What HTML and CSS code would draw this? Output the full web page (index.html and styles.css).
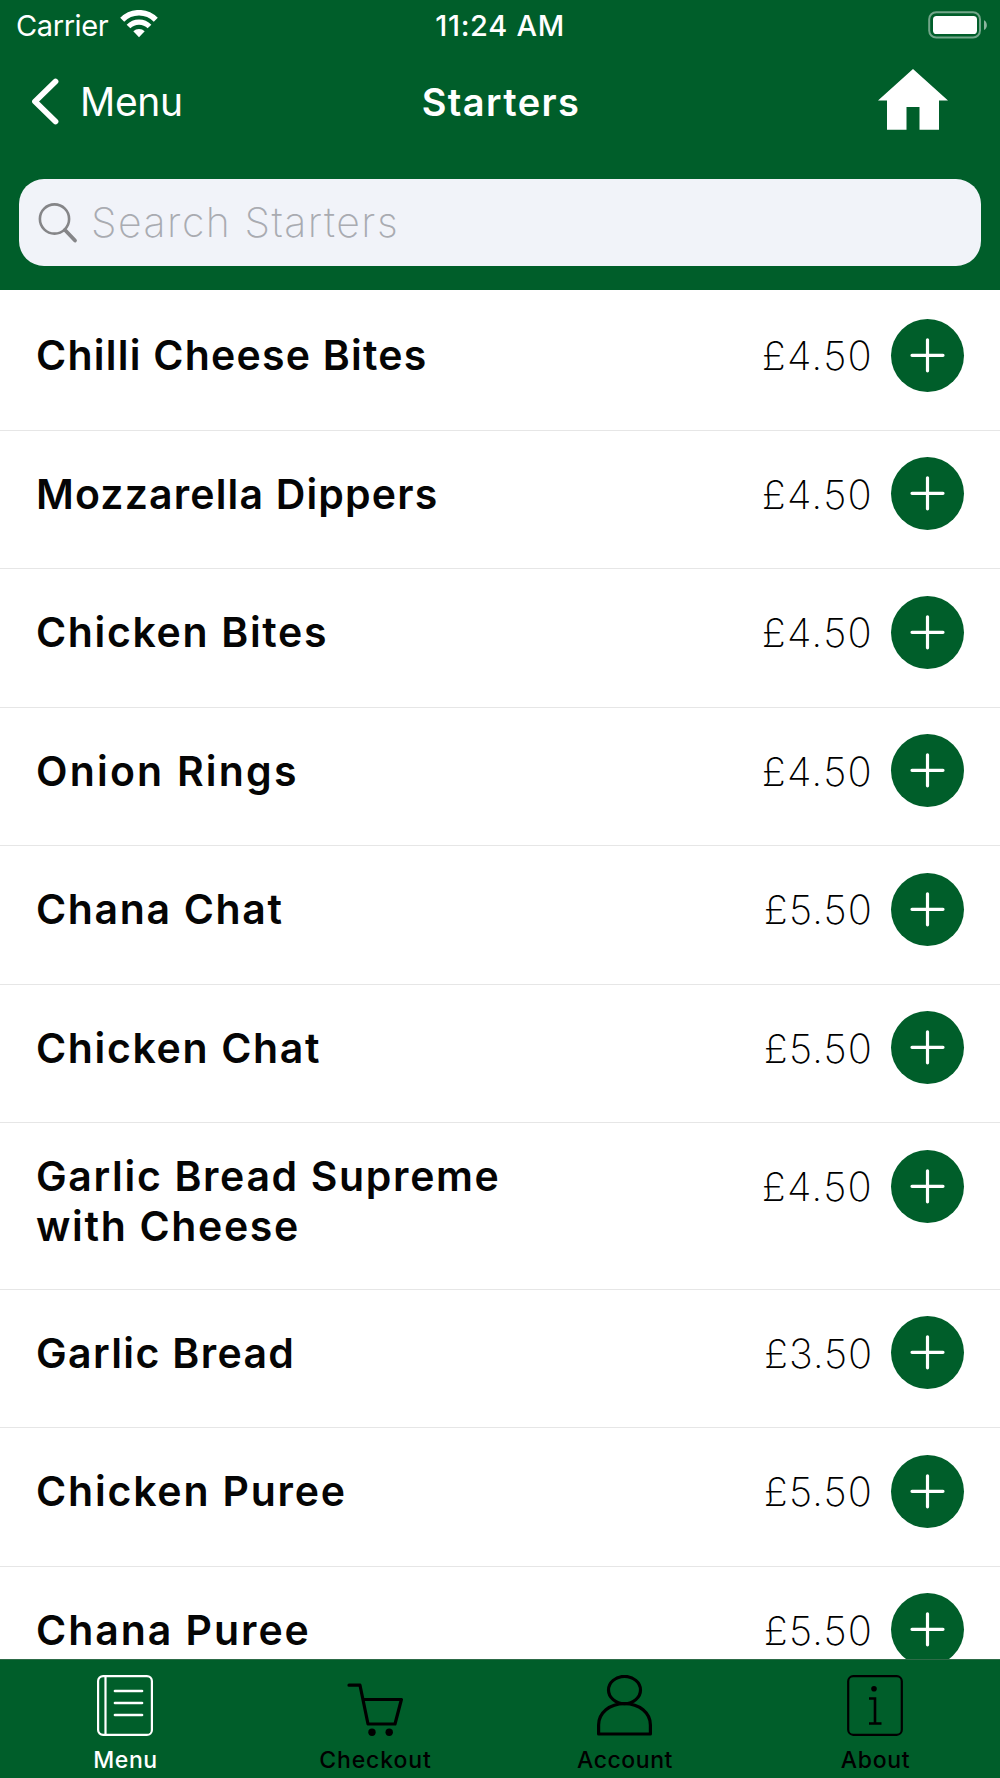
FILE: index.html
```html
<!DOCTYPE html>
<html lang="en">
<head>
<meta charset="utf-8">
<title>Starters</title>
<link rel="stylesheet" href="styles.css">
</head>
<body>
<svg class="defs" width="0" height="0" aria-hidden="true">
  <symbol id="plus" viewBox="0 0 73 73"><path d="M36.5 20.800V51.800M21 36.300H52" fill="none" stroke="#fff" stroke-width="3.200" stroke-linecap="round"/></symbol>
</svg>
<div class="app">
  <header class="header">
    <div class="status">
      <div class="carrier"><span>Carrier</span>
        <svg width="38" height="28" viewBox="0 0 38 28" fill="none" stroke="#fff"><path d="M2.200 9.800a23.500 23.500 0 0 1 33.600 0" stroke-width="5.600"/><path d="M8.500 16.500a14.800 14.800 0 0 1 21 0" stroke-width="5.200"/><path d="M13.300 21.200a8.200 8.200 0 0 1 11.400 0L19 27.200z" fill="#fff" stroke="none"/></svg>
      </div>
      <div class="time">11:24 AM</div>
      <svg class="battery" width="60" height="28" viewBox="0 0 60 28"><rect x="1.200" y="1.200" width="50.800" height="25.400" rx="7" fill="none" stroke="#fff" stroke-opacity=".45" stroke-width="2"/><rect x="5" y="5" width="44" height="18" rx="3.600" fill="#fff"/><path d="M56 9.200c3.800 1.600 3.800 8.200 0 9.800z" fill="#fff" fill-opacity=".55"/></svg>
    </div>
    <nav class="nav">
      <a class="back"><svg width="28" height="48" viewBox="0 0 28 48"><path d="M24.500 4.500 4 24.500 24.500 44.500" fill="none" stroke="#fff" stroke-width="5.800" stroke-linecap="round" stroke-linejoin="round"/></svg><span>Menu</span></a>
      <h1 class="title">Starters</h1>
      <svg class="home" width="70" height="61" viewBox="0 0 70 61"><path d="M35 0 70 31.500H61V60.700H41.500V38H28.500V60.700H9V31.500H0z" fill="#fff"/></svg>
    </nav>
    <div class="search">
      <svg width="40" height="42" viewBox="0 0 40 42" fill="none" stroke="#858588"><circle cx="16.500" cy="17" r="14.600" stroke-width="2.600"/><path d="M27 28 37 38.500" stroke-width="3.800" stroke-linecap="round"/></svg>
      <span>Search Starters</span>
    </div>
  </header>
  <main class="list">
    <div class="row"><div class="name n1">Chilli Cheese Bites</div><div class="price p4">£4.50</div><svg class="add"><use href="#plus"/></svg></div>
    <div class="row"><div class="name n2">Mozzarella Dippers</div><div class="price p4">£4.50</div><svg class="add"><use href="#plus"/></svg></div>
    <div class="row"><div class="name n3">Chicken Bites</div><div class="price p4">£4.50</div><svg class="add"><use href="#plus"/></svg></div>
    <div class="row"><div class="name n4">Onion Rings</div><div class="price p4">£4.50</div><svg class="add"><use href="#plus"/></svg></div>
    <div class="row"><div class="name n3">Chana Chat</div><div class="price p5">£5.50</div><svg class="add"><use href="#plus"/></svg></div>
    <div class="row"><div class="name n3">Chicken Chat</div><div class="price p5">£5.50</div><svg class="add"><use href="#plus"/></svg></div>
    <div class="row"><div class="name n3">Garlic Bread Supreme<br>with Cheese</div><div class="price p4">£4.50</div><svg class="add"><use href="#plus"/></svg></div>
    <div class="row"><div class="name n5">Garlic Bread</div><div class="price p3">£3.50</div><svg class="add"><use href="#plus"/></svg></div>
    <div class="row"><div class="name n6">Chicken Puree</div><div class="price p5">£5.50</div><svg class="add"><use href="#plus"/></svg></div>
    <div class="row"><div class="name n7">Chana Puree</div><div class="price p5">£5.50</div><svg class="add"><use href="#plus"/></svg></div>
  </main>
  <footer class="tabs">
    <a class="tab active"><svg width="56" height="61" viewBox="0 0 56 61" fill="none" stroke="currentColor" stroke-width="2.200"><rect x="1.100" y="1.100" width="53.800" height="58.800" rx="5"/><path d="M8.500 1V60"/><path d="M18 16H45M18 28H45M18 40H45" stroke-width="2.700" stroke-linecap="round"/></svg><span class="t-menu">Menu</span></a>
    <a class="tab"><svg width="56" height="61" viewBox="0 0 56 61" fill="none" stroke="currentColor" stroke-width="3.200" stroke-linecap="round" stroke-linejoin="round"><path d="M2 10.200H13L21 49H48L54.400 24.500H16"/><circle cx="25" cy="57.200" r="3.700" fill="currentColor" stroke="none"/><circle cx="42.200" cy="57.200" r="3.700" fill="currentColor" stroke="none"/></svg><span class="t-checkout">Checkout</span></a>
    <a class="tab"><svg width="56" height="61" viewBox="0 0 56 61" fill="none" stroke="currentColor" stroke-width="3.200" stroke-linejoin="round"><ellipse cx="27.500" cy="15" rx="16" ry="13.600"/><path d="M1.600 59V50C1.600 38 12.500 28.600 27.500 28.600S53.400 38 53.400 50V59z"/></svg><span class="t-account">Account</span></a>
    <a class="tab"><svg width="56" height="61" viewBox="0 0 56 61" fill="none" stroke="currentColor" stroke-width="2.200"><rect x="1.200" y="1.200" width="53.600" height="58.600" rx="5"/><circle cx="27" cy="13.700" r="2.800" fill="currentColor" stroke="none"/><path d="M22 23.500H28V48.500M22 48.500H34.500" stroke-width="2.600"/></svg><span class="t-about">About</span></a>
  </footer>
</div>
</body>
</html>
```
FILE: styles.css
```css
* { box-sizing: border-box; }
body { margin: 0; background: #fff; font-family: Inter, "Liberation Sans", sans-serif; }
svg { display: block; flex: none; }
.defs { position: absolute; }
.app { width: 1000px; height: 1778px; display: flex; flex-direction: column; overflow: hidden; }

.header { flex: none; height: 290px; background: #005e2a; color: #fff; }
.status { height: 50px; display: grid; grid-template-columns: 1fr auto 1fr; align-items: center; padding: 0 12px 0 16px; }
.carrier { display: flex; align-items: center; gap: 12px; font-size: 29px; letter-spacing: -.4px; }
.carrier svg { margin-bottom: 2px; }
.time { font-size: 29px; font-weight: 500; letter-spacing: .7px; margin-right: 4px; }
.battery { justify-self: end; margin-bottom: 1px; }

.nav { height: 104px; display: grid; grid-template-columns: 1fr auto 1fr; align-items: center; padding: 0 52px 2px 31px; }
.back { display: flex; align-items: center; gap: 21px; font-size: 39px; letter-spacing: -.3px; }
.title { margin: 0; padding: 2px 0 0 23px; font-size: 38px; font-weight: 600; letter-spacing: 1.4px; }
.home { justify-self: end; margin-bottom: 4px; }

.search { height: 87px; margin: 25px 19px 0; padding-left: 19px; display: flex; align-items: center; gap: 13px; background: #f1f3f9; border-radius: 25px; color: #a9abb1; font-size: 41px; font-weight: 200; letter-spacing: 1.5px; }
.search span { padding-bottom: 2px; }

.list { flex: 1; min-height: 0; overflow: hidden; padding-top: 2.300px; }
.row { display: flex; align-items: flex-start; min-height: 138.540px; padding: 28px 36px 38.200px; border-bottom: 1px solid #e6e6e6; }
.name { flex: 1; min-height: 70px; display: flex; align-items: center; margin: .8px 0 -.8px; font-size: 41px; font-weight: 600; line-height: 49.600px; color: #050505; }
.price { font-size: 40px; font-weight: 250; line-height: 70px; margin: .7px 18px -.7px 0; color: #000; }
.add { width: 73px; height: 73px; margin: -1.500px 0 -2px; border-radius: 50%; background: #005e2a; }
.n1 { letter-spacing: 1.24px; }
.n2 { letter-spacing: 1.16px; }
.n3 { letter-spacing: 1.65px; }
.n4 { letter-spacing: 2.2px; }
.n5 { letter-spacing: 1.35px; }
.n6 { letter-spacing: 1.8px; }
.n7 { letter-spacing: 1.96px; }
.p3 { letter-spacing: .85px; }
.p4 { letter-spacing: 1.28px; }
.p5 { letter-spacing: 1.05px; }

.tabs { flex: none; height: 119px; display: grid; grid-template-columns: repeat(4, 1fr); background: #005e2a; border-top: 1px solid #2d6b47; }
.tab { display: flex; flex-direction: column; align-items: center; padding: 15px 0 0 1px; color: #000; font-size: 23px; font-weight: 500; line-height: 28px; gap: 10px; }
.tab svg { margin-right: 2px; }
.active { color: #fff; }
.t-menu { letter-spacing: .55px; }
.t-checkout { letter-spacing: .92px; }
.t-account { letter-spacing: .54px; margin-right: 1px; }
.t-about { letter-spacing: .69px; }
```
